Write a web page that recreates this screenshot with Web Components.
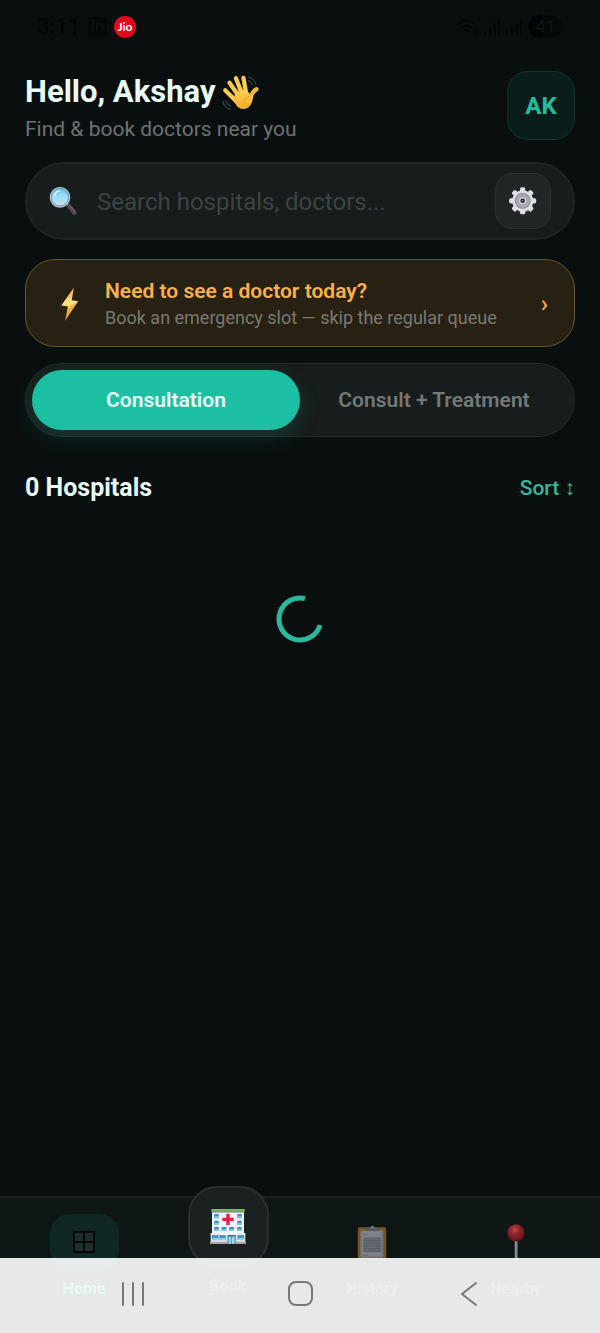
<!DOCTYPE html>
<html lang="en">
<head>
<meta charset="utf-8">
<meta name="viewport" content="width=device-width, initial-scale=1">
<title>Find doctors</title>
<style>
  html, body {
    margin: 0;
    min-height: 100%;
    background: #090f0f;
  }
  body {
    font-family: Roboto, "Liberation Sans", sans-serif;
    color: #e8fbf8;
  }
</style>
</head>
<body>
<doctor-app></doctor-app>

<script>
const ICONS = {
  wave: `<svg viewBox="0 0 120 120">
    <defs><linearGradient id="g" x1="0" y1="0" x2="0" y2="1"><stop offset="0" stop-color="#ffd257"/><stop offset="1" stop-color="#f7a928"/></linearGradient></defs>
    <g fill="none" stroke="#ffcb4c" stroke-width="13" stroke-linecap="round">
      <path d="M13 53 46 86M26 30 54 70M46 16 64 62M69 15 77 60"/>
      <path d="M109 50Q97 56 91 76" stroke="#fbb635"/>
    </g>
    <path d="M40 78Q44 57 60 54L77 49Q87 61 90 68L98 62Q101 91 84 106Q65 117 50 103Q40 92 40 78Z" fill="url(#g)"/>
    <g fill="none" stroke="#d98b1b" stroke-width="2" stroke-linecap="round"><path d="M38 66 46 75M50 50 56 59M64 42 68 52"/><path d="M72 84Q78 73 89 70"/></g>
    <g fill="none" stroke="#4c575e" stroke-width="3" stroke-linecap="round"><path d="M86 13Q103 17 107 34M84 23Q94 26 97 36M6 87Q10 109 29 112M15 87Q19 100 31 103"/></g>
  </svg>`,
  search: `<svg viewBox="0 0 84 90">
    <defs><linearGradient id="g" x1="0" y1="0" x2="0" y2="1"><stop offset="0" stop-color="#63c8ed"/><stop offset=".55" stop-color="#a6e0f8"/><stop offset="1" stop-color="#d8d4f4"/></linearGradient></defs>
    <path d="M53 52 62 61" stroke="#a1a9b0" stroke-width="7"/>
    <path d="M60 60 76 80" stroke="#51464f" stroke-width="13" stroke-linecap="round"/>
    <path d="M61 58 78 78" stroke="#7b6a76" stroke-width="3" stroke-linecap="round"/>
    <circle cx="33" cy="34" r="29" fill="url(#g)" stroke="#b9c8ce" stroke-width="4"/>
    <circle cx="33" cy="34" r="26" fill="none" stroke="#367b98" stroke-width="2"/>
    <path d="M16 29Q20 16 32 14" fill="none" stroke="#e6faff" stroke-width="4" stroke-linecap="round"/>
  </svg>`,
  bolt: `<svg viewBox="0 0 60 110">
    <defs><linearGradient id="g" x1="0" y1="0" x2="0" y2="1"><stop offset="0" stop-color="#f5a52e"/><stop offset=".45" stop-color="#ffe38a"/><stop offset=".6" stop-color="#ffd055"/><stop offset="1" stop-color="#e0820f"/></linearGradient></defs>
    <path d="M44 3 4 60 25 63 16 108 57 46 37 43Z" fill="url(#g)"/>
    <path d="M57 46 16 108 31 62" fill="#e79422" opacity=".45"/>
  </svg>`,
  gear: `<svg viewBox="0 0 84 88">
    <g fill="#6d6c75" transform="translate(2 3)"><circle cx="41" cy="43" r="31"/></g>
    <g fill="#dedee4">
      <circle cx="41" cy="42" r="32"/>
      <rect x="33" y="1" width="16" height="82" rx="5"/><rect x="0" y="34" width="82" height="16" rx="5"/>
      <g transform="rotate(45 41 42)"><rect x="33" y="1" width="16" height="82" rx="5"/><rect x="0" y="34" width="82" height="16" rx="5"/></g>
    </g>
    <circle cx="41" cy="42" r="24" fill="#85858e"/>
    <circle cx="41" cy="42" r="19" fill="#a3a3ab" stroke="#bdbdc5" stroke-width="3"/>
    <circle cx="41" cy="42" r="9" fill="#292b31" stroke="#d9d9e0" stroke-width="4"/>
    <circle cx="41" cy="42" r="2" fill="#c4c4ca"/>
  </svg>`,
  home: `<svg viewBox="0 0 22 22"><path d="M1 1H21V21H1ZM11 1V21M1 11H21" fill="#1b302d" stroke="#020404" stroke-width="2"/></svg>`,
  hospital: `<svg viewBox="0 0 108 105">
    <path d="M4 0H104V10H4Z" fill="#69a95a"/><path d="M4 1H104V4H4Z" fill="#82c46e"/>
    <path d="M6 10H102V75H6Z" fill="#f1f2f8"/>
    <path d="M2 73H106V101H2Z" fill="#d9dce8"/><path d="M2 72H106V76H2Z" fill="#fff"/>
    <path d="M0 100H108V105H0Z" fill="#a5a0a9"/>
    <g fill="#3391c3"><path d="M13 15H26V28H13ZM82 15H95V28H82ZM13 35H26V47H13ZM82 35H95V47H82ZM13 54H26V66H13ZM35 54H49V66H35ZM58 54H72V66H58ZM82 54H95V66H82ZM6 79H25V91H6ZM28 79H47V91H28ZM83 79H102V91H83Z"/></g>
    <g fill="#8acde9"><path d="M15 22H26V28H15ZM84 22H95V28H84ZM15 42H26V47H15ZM84 42H95V47H84ZM15 61H26V66H15ZM37 61H49V66H37ZM60 61H72V66H60ZM84 61H95V66H84ZM8 86H25V91H8ZM30 86H47V91H30ZM85 86H102V91H85Z"/></g>
    <path d="M53 78H77V104H53Z" fill="#427d96"/><path d="M56 83H64V104H56ZM66 83H74V104H66Z" fill="#9bdde4"/>
    <path d="M49 14H59V26H71V36H59V48H49V36H37V26H49Z" fill="#e91d46"/>
  </svg>`,
  clipboard: `<svg viewBox="0 0 90 106">
    <rect x="2" y="7" width="86" height="97" rx="6" fill="#745525"/>
    <path d="M10 16H79V99H10Z" fill="#72767e"/>
    <path d="M13 19H73V93H13Z" fill="#7f838b"/>
    <path d="M27 18Q29 8 39 7Q43 -2 52 5Q62 8 64 18Z" fill="#555d64"/>
    <circle cx="45" cy="7" r="3" fill="#8a9197"/>
    <path d="M18 40H72V82H18Z" fill="#656b74"/>
    <path d="M18 29H34M18 39H72M18 47H72M18 55H72M18 63H72M18 71H72M18 79H72M18 91H34" stroke="#4d545e" stroke-width="2"/>
  </svg>`,
  pin: `<svg viewBox="0 0 54 112">
    <defs><radialGradient id="g" cx=".42" cy=".3" r=".7"><stop offset="0" stop-color="#b94c51"/><stop offset=".35" stop-color="#95272d"/><stop offset="1" stop-color="#5c151a"/></radialGradient></defs>
    <path d="M23 48H32V103L27 111 23 103Z" fill="#778080"/><path d="M24 49H27V103H24Z" fill="#929b9b"/>
    <circle cx="27" cy="27" r="26" fill="url(#g)"/>
  </svg>`
};

class EmojiIcon extends HTMLElement {
  constructor() {
    super();
    this._root = this.attachShadow({ mode: 'open' });
  }

  connectedCallback() {
    this._root.innerHTML = `
      <style>
        :host { display: inline-block; flex: none; }
        svg { display: block; width: 100%; height: 100%; }
      </style>
      ${ICONS[this.getAttribute('name')] || ''}
    `;
  }
}

class StatusBar extends HTMLElement {
  constructor() {
    super();
    this._root = this.attachShadow({ mode: 'open' });
    this._root.innerHTML = `
      <style>
        :host {
          display: flex;
          align-items: center;
          justify-content: space-between;
          height: 53px;
          padding: 0 37px;
          color: #040808;
        }
        div { display: flex; align-items: center; }
        .left { gap: 7px; }
        .right { gap: 5px; }
        time { font-size: 22px; font-weight: 500; width: 44px; }
        .in {
          width: 19px;
          height: 19px;
          border-radius: 2px;
          background: #040808;
          color: #0b1212;
          font-size: 17px;
          font-weight: 700;
          line-height: 19px;
          text-align: center;
        }
        .jio {
          width: 22px;
          height: 22px;
          border-radius: 50%;
          background: #e2071c;
          color: #fff;
          font: 700 12px/21px Lato, sans-serif;
          text-align: center;
        }
        .battery {
          width: 35px;
          height: 23px;
          border-radius: 12px;
          background: linear-gradient(90deg, #020404 41%, #050909 41%);
          color: #0c1413;
          font-size: 17px;
          font-weight: 500;
          line-height: 23px;
          text-align: center;
        }
      </style>
      <div class="left">
        <time>3:11</time>
        <span class="in">in</span>
        <span class="jio">Jio</span>
      </div>
      <div class="right">
        <svg width="22" height="18" viewBox="0 0 22 18" fill="none" stroke="#040808" stroke-width="2">
          <path d="M1 6Q9-1 18 6M4 10Q9 5 15 10M7 13Q10 11 12 13M19 10V16M16 13 19 16 22 13"/>
        </svg>
        <svg width="17" height="16" viewBox="0 0 17 16" fill="#040808"><path d="M0 12H2V16H0ZM5 8H7V16H5ZM10 4H12V16H10ZM14 0H16V16H14Z"/></svg>
        <svg width="17" height="16" viewBox="0 0 17 16" fill="#040808"><path d="M0 12H2V16H0ZM5 8H7V16H5ZM10 4H12V16H10ZM14 0H16V16H14Z"/></svg>
        <span class="battery">41</span>
      </div>
    `;
  }
}

class GreetingHeader extends HTMLElement {
  constructor() {
    super();
    this._root = this.attachShadow({ mode: 'open' });
    this._root.innerHTML = `
      <style>
        :host { display: flex; justify-content: space-between; align-items: flex-start; }
        h1 {
          display: flex;
          align-items: center;
          gap: 5px;
          margin: 0 0 2px;
          font-size: 31px;
          font-weight: 700;
          line-height: 42px;
        }
        emoji-icon { width: 39px; height: 39px; }
        p { margin: 0; font-size: 21px; line-height: 28px; color: #6d7271; }
        button {
          width: 68px;
          height: 69px;
          padding: 0;
          border: 1px solid #15342f;
          border-radius: 21px;
          background: #091e1b;
          color: #21be9f;
          font: 700 24px/28px Roboto, sans-serif;
        }
      </style>
      <div>
        <h1><slot></slot><emoji-icon name="wave"></emoji-icon></h1>
        <p><slot name="sub"></slot></p>
      </div>
      <button aria-label="Profile">${this.getAttribute('initials')}</button>
    `;
  }
}

class SearchBar extends HTMLElement {
  constructor() {
    super();
    this._root = this.attachShadow({ mode: 'open' });
    this._root.innerHTML = `
      <style>
        :host {
          display: flex;
          align-items: center;
          box-sizing: border-box;
          height: 78px;
          padding: 0 22px;
          border: 2px solid #1f2424;
          border-radius: 39px;
          background: #171c1c;
        }
        label { display: flex; }
        label emoji-icon { width: 28px; height: 30px; }
        input {
          flex: 1;
          min-width: 0;
          margin: 0 20px;
          padding: 2px 0 0;
          border: 0;
          outline: 0;
          background: none;
          color: #e8fbf8;
          font: 24px/32px Roboto, sans-serif;
        }
        input::placeholder { color: #3e4343; opacity: 1; }
        button {
          display: flex;
          align-items: center;
          justify-content: center;
          width: 56px;
          height: 56px;
          padding: 0;
          border: 1px solid #2c3030;
          border-radius: 17px;
          background: #222626;
        }
        button emoji-icon { width: 28px; height: 29px; }
      </style>
      <label for="q" aria-label="Search"><emoji-icon name="search"></emoji-icon></label>
      <input id="q" type="search" placeholder="Search hospitals, doctors...">
      <button aria-label="Filters"><emoji-icon name="gear"></emoji-icon></button>
    `;
  }
}

class EmergencyBanner extends HTMLElement {
  constructor() {
    super();
    this._root = this.attachShadow({ mode: 'open' });
    this._root.innerHTML = `
      <style>
        :host { display: block; }
        a {
          display: flex;
          align-items: center;
          box-sizing: border-box;
          height: 88px;
          padding: 2px 26px 0 34px;
          border: 1px solid #6e5327;
          border-radius: 30px;
          background: #272114;
          color: #fdb04a;
          text-decoration: none;
        }
        emoji-icon { width: 19px; height: 36px; margin-right: 26px; }
        .text { flex: 1; }
        strong { display: block; font-size: 21px; font-weight: 600; line-height: 28px; }
        span { display: block; font-size: 18px; line-height: 26px; color: #7b7971; }
        i { font-style: normal; font-weight: 500; font-size: 24px; line-height: 28px; }
      </style>
      <a href="#">
        <emoji-icon name="bolt"></emoji-icon>
        <div class="text">
          <strong><slot></slot></strong>
          <span><slot name="sub"></slot></span>
        </div>
        <i>›</i>
      </a>
    `;
  }
}

class SegmentTabs extends HTMLElement {
  constructor() {
    super();
    const labels = this.getAttribute('labels').split('|');
    this._root = this.attachShadow({ mode: 'open' });
    this._root.innerHTML = `
      <style>
        :host {
          display: grid;
          grid-template-columns: 1fr 1fr;
          box-sizing: border-box;
          height: 74px;
          padding: 6px;
          border: 1px solid #252a2a;
          border-radius: 37px;
          background: #171c1c;
        }
        button {
          padding: 0;
          border: 0;
          border-radius: 30px;
          background: none;
          color: #747978;
          font: 600 21px/28px Roboto, sans-serif;
        }
        button[aria-selected="true"] {
          background: #1dbfa2;
          color: #e8fffc;
          box-shadow: 0 7px 22px rgba(29, 191, 162, .18);
        }
      </style>
      ${labels.map((label, i) => `<button role="tab" aria-selected="${i === 0}">${label}</button>`).join('')}
    `;
    this._root.addEventListener('click', e => {
      if (e.target.localName !== 'button') return;
      this._root.querySelectorAll('button').forEach(b => b.setAttribute('aria-selected', b === e.target));
    });
  }
}

class ListHeader extends HTMLElement {
  constructor() {
    super();
    this._root = this.attachShadow({ mode: 'open' });
    this._root.innerHTML = `
      <style>
        :host { display: flex; align-items: center; justify-content: space-between; }
        h2 { margin: 0; font-size: 25px; font-weight: 700; line-height: 32px; }
        button {
          padding: 0;
          border: 0;
          background: none;
          color: #35b99d;
          font: 500 21px/28px Roboto, sans-serif;
        }
      </style>
      <h2><slot></slot></h2>
      <button>Sort ↕</button>
    `;
  }
}

class LoadingSpinner extends HTMLElement {
  constructor() {
    super();
    const radius = 21;
    const circumference = radius * 2 * Math.PI;
    this._root = this.attachShadow({ mode: 'open' });
    this._root.innerHTML = `
      <style>
        :host { display: flex; justify-content: center; }
        circle { transform: rotate(17deg); transform-origin: 50% 50%; }
      </style>
      <svg width="48" height="48" role="img" aria-label="Loading">
        <circle cx="24" cy="24" r="${radius}" fill="none" stroke="#2ab99c" stroke-width="5"
          stroke-dasharray="${circumference * .735} ${circumference}"/>
      </svg>
    `;
  }
}

class TabItem extends HTMLElement {
  constructor() {
    super();
    this._root = this.attachShadow({ mode: 'open' });
    this._root.innerHTML = `
      <style>
        :host { display: block; color: #4a5150; }
        a {
          display: flex;
          flex-direction: column;
          align-items: center;
          gap: 9px;
          padding-top: 16px;
          color: inherit;
          text-decoration: none;
          font-size: 16px;
          font-weight: 700;
          line-height: 20px;
        }
        .tile {
          display: flex;
          align-items: center;
          justify-content: center;
          box-sizing: border-box;
          width: 69px;
          height: 56px;
          border-radius: 20px;
        }
        :host([active]) { color: #2bdcb7; }
        :host([active]) .tile { background: #102824; }
        :host([raised]) a { padding-top: 0; margin-top: -12px; }
        :host([raised]) .tile {
          width: 81px;
          height: 81px;
          border: 2px solid #2a302f;
          border-radius: 29px;
          background: #1b2121;
        }
        emoji-icon[name="home"] { width: 22px; height: 22px; }
        emoji-icon[name="hospital"] { width: 36px; height: 35px; }
        emoji-icon[name="clipboard"] { width: 30px; height: 35px; }
        emoji-icon[name="pin"] { width: 18px; height: 37px; }
      </style>
      <a href="#">
        <span class="tile"><emoji-icon name="${this.getAttribute('icon')}"></emoji-icon></span>
        <slot></slot>
      </a>
    `;
  }
}

class TabBar extends HTMLElement {
  constructor() {
    super();
    this._root = this.attachShadow({ mode: 'open' });
    this._root.innerHTML = `
      <style>
        :host { display: block; }
        nav {
          display: grid;
          grid-template-columns: repeat(4, 1fr);
          box-sizing: border-box;
          height: 137px;
          padding: 0 12px;
          border-top: 2px solid #1a2221;
          background: #0e1716;
        }
      </style>
      <nav><slot></slot></nav>
    `;
  }
}

/* Android three-button bar, laid translucent over the bottom of the app */
class SystemNav extends HTMLElement {
  constructor() {
    super();
    this._root = this.attachShadow({ mode: 'open' });
    this._root.innerHTML = `
      <style>
        :host {
          position: fixed;
          left: 0;
          right: 0;
          bottom: 0;
          display: flex;
          align-items: center;
          justify-content: center;
          gap: 112px;
          box-sizing: border-box;
          height: 75px;
          padding-bottom: 3px;
          background: rgba(250, 252, 251, .92);
        }
        button { display: flex; padding: 0; border: 0; background: none; }
        svg { width: 56px; height: 28px; fill: none; stroke: #777978; stroke-width: 2; stroke-linecap: round; stroke-linejoin: round; }
      </style>
      <button aria-label="Recent apps"><svg viewBox="0 0 56 28"><path d="M19 3V25M29 3V25M39 3V25"/></svg></button>
      <button aria-label="Home screen"><svg viewBox="0 0 56 28"><rect x="17" y="2" width="23" height="23" rx="7"/></svg></button>
      <button aria-label="Back"><svg viewBox="0 0 56 28"><path d="M36 3 22 14 36 25"/></svg></button>
    `;
  }
}

class DoctorApp extends HTMLElement {
  constructor() {
    super();
    this._root = this.attachShadow({ mode: 'open' });
    this._root.innerHTML = `
      <style>
        :host { display: flex; flex-direction: column; min-height: 100vh; }
        main { flex: 1; padding: 18px 25px 0; }
        search-bar, emergency-banner { margin-top: 19px; }
        segment-tabs { margin-top: 16px; }
        list-header { margin-top: 35px; }
        loading-spinner { margin-top: 91px; }
      </style>
      <status-bar></status-bar>
      <main>
        <greeting-header initials="AK">Hello, Akshay<span slot="sub">Find &amp; book doctors near you</span></greeting-header>
        <search-bar></search-bar>
        <emergency-banner>Need to see a doctor today?<span slot="sub">Book an emergency slot — skip the regular queue</span></emergency-banner>
        <segment-tabs labels="Consultation|Consult + Treatment"></segment-tabs>
        <list-header>0 Hospitals</list-header>
        <loading-spinner></loading-spinner>
      </main>
      <tab-bar>
        <tab-item icon="home" active>Home</tab-item>
        <tab-item icon="hospital" raised>Book</tab-item>
        <tab-item icon="clipboard">History</tab-item>
        <tab-item icon="pin">Nearby</tab-item>
      </tab-bar>
      <system-nav></system-nav>
    `;
  }
}

window.customElements.define('emoji-icon', EmojiIcon);
window.customElements.define('status-bar', StatusBar);
window.customElements.define('greeting-header', GreetingHeader);
window.customElements.define('search-bar', SearchBar);
window.customElements.define('emergency-banner', EmergencyBanner);
window.customElements.define('segment-tabs', SegmentTabs);
window.customElements.define('list-header', ListHeader);
window.customElements.define('loading-spinner', LoadingSpinner);
window.customElements.define('tab-item', TabItem);
window.customElements.define('tab-bar', TabBar);
window.customElements.define('system-nav', SystemNav);
window.customElements.define('doctor-app', DoctorApp);
</script>
</body>
</html>
